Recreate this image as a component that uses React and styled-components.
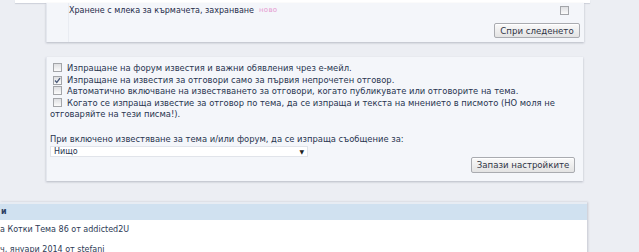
import React from 'react';
import styled, { createGlobalStyle } from 'styled-components';

const GlobalStyle = createGlobalStyle`
  body {
    margin: 0;
    background: #eceef3;
    font-family: 'DejaVu Sans', Verdana, sans-serif;
    font-size: 8.4px;
    color: #27344f;
  }
`;

const Page = styled.div`
  width: 639px;
  height: 252px;
  overflow: hidden;
`;

const TopStrip = styled.div`
  margin-left: 15px;
  width: 575px;
  height: 3px;
  background: #ffffff;
  box-shadow: 0 1px 1px rgba(150, 155, 170, 0.35);
`;

const Panel = styled.section`
  margin-left: 46px;
  width: 537px;
  background: #f4f6fa;
  box-shadow: 0 1px 2px rgba(120, 125, 140, 0.45);
  border-left: 1px solid #e4e7ee;
`;

const WatchPanel = styled(Panel)`
  height: 39px;
  display: grid;
  grid-template-columns: 21px 1fr;
`;

const WatchCell = styled.div`
  border-left: 1px solid #e9ecf2;
  display: flex;
  flex-direction: column;
  padding-right: 4px;
`;

const ThreadRow = styled.div`
  display: flex;
  align-items: center;
  height: 14px;
`;

const ThreadTitle = styled.span`
  font-size: 8px;
  color: #1f2c4a;
`;

const NewTag = styled.span`
  margin-left: 5px;
  font-size: 7px;
  color: #e59ad0;
  letter-spacing: 0.3px;
`;

const Spacer = styled.div`
  flex: 1;
`;

const ButtonRow = styled.div`
  display: flex;
  justify-content: flex-end;
  padding-top: ${(p) => p.$top || 0}px;
`;

const Button = styled.button`
  font-family: 'DejaVu Sans', Verdana, sans-serif;
  font-size: 8.6px;
  color: #2e3445;
  height: ${(p) => p.$h}px;
  width: ${(p) => p.$w}px;
  padding: 0;
  border: 1px solid #a9abb0;
  border-radius: 2px;
  background: linear-gradient(#fafafa, #e3e3e3);
  box-shadow: inset 0 1px 0 #ffffff;
  cursor: pointer;
`;

const BoxWrap = styled.span`
  display: inline-flex;
  align-items: center;
  justify-content: center;
  box-sizing: border-box;
  width: 9px;
  height: 9px;
  border: 1px solid #a3a5a9;
  background: linear-gradient(#dedfe2, #fbfbfb);
  vertical-align: -1px;
  margin-right: ${(p) => p.$gap || 0}px;
  flex-shrink: 0;
`;

const CheckBox = ({ checked, gap }) => (
  <BoxWrap $gap={gap}>
    {checked && (
      <svg width="7" height="7" viewBox="0 0 7 7">
        <path d="M1 3.5 L2.8 5.4 L6 1.2" fill="none" stroke="#4a5a7a" strokeWidth="1.3" />
      </svg>
    )}
  </BoxWrap>
);

const OptionsPanel = styled(Panel)`
  margin-top: 15px;
  height: 124px;
  box-sizing: border-box;
  padding: 6px 20px 0 3px;
`;

const OptionList = styled.div`
  display: flex;
  flex-direction: column;
`;

const Option = styled.label`
  display: block;
  line-height: 11.5px;
  padding-left: 3px;
  text-indent: 0;
`;

const OptionText = styled.span`
  margin-left: 5px;
`;

const Wrapped = styled(Option)`
  padding-left: 0;
  text-indent: 3px;
`;

const Prompt = styled.div`
  margin-top: 13px;
  line-height: 11px;
`;

const Select = styled.div`
  margin-top: 1px;
  width: 258px;
  height: 11px;
  box-sizing: border-box;
  background: #ffffff;
  border: 1px solid #e1e4ea;
  display: flex;
  align-items: center;
  justify-content: space-between;
  padding: 0 3px;
  font-size: 8px;
`;

const Arrow = styled.span`
  font-size: 6px;
  color: #222;
`;

const Recent = styled.section`
  margin-top: 21px;
  width: 587px;
  background: #ffffff;
  border-top: 2px solid #e7ecf3;
  box-shadow: 1px 0 2px rgba(140, 145, 160, 0.4);
  height: 60px;
`;

const RecentHead = styled.div`
  height: 16px;
  background: #d0e1f0;
  font-weight: bold;
  font-size: 8px;
  line-height: 16px;
  color: #2b3e63;
  padding-left: 1px;
`;

const RecentLine = styled.div`
  line-height: 12px;
  margin-top: ${(p) => p.$top}px;
  font-size: 8px;
  color: #2d3a55;
`;

const options = [
  { text: 'Изпращане на форум известия и важни обявления чрез е-мейл.' },
  { text: 'Изпращане на известия за отговори само за първия непрочетен отговор.', checked: true },
  { text: 'Автоматично включване на известяването за отговори, когато публикувате или отговорите на тема.' },
];

const longOption =
  'Когато се изпраща известие за отговор по тема, да се изпраща и текста на мнението в писмото (НО моля не отговаряйте на тези писма!).';

export default function App() {
  return (
    <Page>
      <GlobalStyle />
      <TopStrip />
      <WatchPanel>
        <div />
        <WatchCell>
          <ThreadRow>
            <ThreadTitle>Хранене с млека за кърмачета, захранване</ThreadTitle>
            <NewTag>ново</NewTag>
            <Spacer />
            <CheckBox gap={11} />
          </ThreadRow>
          <ButtonRow $top={6}>
            <Button $w={86} $h={15}>Спри следенето</Button>
          </ButtonRow>
        </WatchCell>
      </WatchPanel>

      <OptionsPanel>
        <OptionList>
          {options.map((o) => (
            <Option key={o.text}>
              <CheckBox checked={o.checked} />
              <OptionText>{o.text}</OptionText>
            </Option>
          ))}
          <Wrapped>
            <CheckBox />
            <OptionText>{longOption}</OptionText>
          </Wrapped>
        </OptionList>
        <Prompt>При включено известяване за тема и/или форум, да се изпраща съобщение за:</Prompt>
        <Select>
          <span>Нищо</span>
          <Arrow>▼</Arrow>
        </Select>
        <ButtonRow>
          <Button $w={104} $h={16} style={{ marginRight: -12 }}>Запази настройките</Button>
        </ButtonRow>
      </OptionsPanel>

      <Recent>
        <RecentHead>и</RecentHead>
        <RecentLine $top={4}>а Котки Тема 86 от addicted2U</RecentLine>
        <RecentLine $top={8}>ч, януари 2014 от stefani</RecentLine>
      </Recent>
    </Page>
  );
}
